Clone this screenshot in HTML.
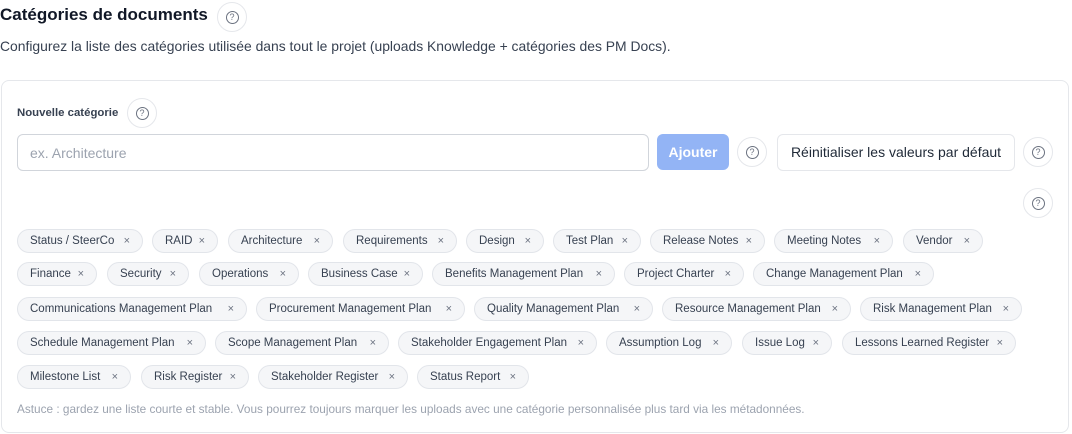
<!DOCTYPE html><html><head><meta charset="utf-8"><style>
*{box-sizing:border-box;margin:0;padding:0}
body{width:1072px;height:434px;background:#fff;font-family:"Liberation Sans",sans-serif;color:#1f2937;position:relative;overflow:hidden}
.a{position:absolute}
.q{position:absolute;width:30px;height:30px;border:1px solid #e5e7eb;border-radius:50%;background:#fff;display:flex;align-items:center;justify-content:center}
.q span{width:13px;height:13px;border:1px solid #6b7280;border-radius:50%;font-size:9px;color:#6b7280;display:flex;align-items:center;justify-content:center;line-height:1}
.c{position:absolute;height:24px;border:1px solid #e2e5ea;background:#f5f6f8;border-radius:12px;font-size:11.5px;color:#374151;display:flex;align-items:center;padding-left:12px;white-space:nowrap}
.c i{font-style:normal;color:#6b7280;font-size:11px;position:absolute;right:12px;top:5px}
</style></head><body>
<div class="a" style="left:0;top:5px;font-size:17px;font-weight:bold;color:#111827">Catégories de documents</div>
<div class="q" style="left:217px;top:2px"><span>?</span></div>
<div class="a" style="left:0;top:38px;font-size:13.9px;color:#374151">Configurez la liste des catégories utilisée dans tout le projet (uploads Knowledge + catégories des PM Docs).</div>
<div class="a" style="left:1px;top:80px;width:1068px;height:353px;border:1px solid #e5e7eb;border-radius:8px"></div>
<div class="a" style="left:17px;top:107px;font-size:11.4px;font-weight:bold;color:#374151">Nouvelle catégorie</div>
<div class="q" style="left:127px;top:98px"><span>?</span></div>
<div class="a" style="left:17px;top:134px;width:632px;height:37px;border:1px solid #d1d5db;border-radius:6px;font-size:14px;color:#9ca3af;padding:10px 12px">ex. Architecture</div>
<div class="a" style="left:657px;top:134px;width:72px;height:36px;background:#93b4f5;border-radius:6px;color:#fff;font-size:14px;font-weight:bold;text-align:center;line-height:36px">Ajouter</div>
<div class="q" style="left:737px;top:137px"><span>?</span></div>
<div class="a" style="left:777px;top:134px;width:238px;height:37px;border:1px solid #e5e7eb;border-radius:6px;font-size:14px;color:#1f2937;text-align:center;line-height:35px">Réinitialiser les valeurs par défaut</div>
<div class="q" style="left:1023px;top:137px"><span>?</span></div>
<div class="q" style="left:1023px;top:188px"><span>?</span></div>
<div class="c" style="left:17px;top:229px;width:126px">Status / SteerCo<i>×</i></div>
<div class="c" style="left:152px;top:229px;width:66px">RAID<i>×</i></div>
<div class="c" style="left:228px;top:229px;width:105px">Architecture<i>×</i></div>
<div class="c" style="left:343px;top:229px;width:114px">Requirements<i>×</i></div>
<div class="c" style="left:466px;top:229px;width:78px">Design<i>×</i></div>
<div class="c" style="left:553px;top:229px;width:88px">Test Plan<i>×</i></div>
<div class="c" style="left:650px;top:229px;width:115px">Release Notes<i>×</i></div>
<div class="c" style="left:774px;top:229px;width:119px">Meeting Notes<i>×</i></div>
<div class="c" style="left:903px;top:229px;width:80px">Vendor<i>×</i></div>
<div class="c" style="left:17px;top:262px;width:80px">Finance<i>×</i></div>
<div class="c" style="left:107px;top:262px;width:82px">Security<i>×</i></div>
<div class="c" style="left:199px;top:262px;width:100px">Operations<i>×</i></div>
<div class="c" style="left:308px;top:262px;width:115px">Business Case<i>×</i></div>
<div class="c" style="left:432px;top:262px;width:183px">Benefits Management Plan<i>×</i></div>
<div class="c" style="left:624px;top:262px;width:120px">Project Charter<i>×</i></div>
<div class="c" style="left:753px;top:262px;width:181px">Change Management Plan<i>×</i></div>
<div class="c" style="left:17px;top:297px;width:230px">Communications Management Plan<i>×</i></div>
<div class="c" style="left:256px;top:297px;width:209px">Procurement Management Plan<i>×</i></div>
<div class="c" style="left:474px;top:297px;width:179px">Quality Management Plan<i>×</i></div>
<div class="c" style="left:662px;top:297px;width:189px">Resource Management Plan<i>×</i></div>
<div class="c" style="left:860px;top:297px;width:162px">Risk Management Plan<i>×</i></div>
<div class="c" style="left:17px;top:331px;width:189px">Schedule Management Plan<i>×</i></div>
<div class="c" style="left:215px;top:331px;width:174px">Scope Management Plan<i>×</i></div>
<div class="c" style="left:398px;top:331px;width:199px">Stakeholder Engagement Plan<i>×</i></div>
<div class="c" style="left:606px;top:331px;width:126px">Assumption Log<i>×</i></div>
<div class="c" style="left:742px;top:331px;width:90px">Issue Log<i>×</i></div>
<div class="c" style="left:842px;top:331px;width:174px">Lessons Learned Register<i>×</i></div>
<div class="c" style="left:17px;top:365px;width:114px">Milestone List<i>×</i></div>
<div class="c" style="left:141px;top:365px;width:108px">Risk Register<i>×</i></div>
<div class="c" style="left:258px;top:365px;width:150px">Stakeholder Register<i>×</i></div>
<div class="c" style="left:417px;top:365px;width:112px">Status Report<i>×</i></div>
<div class="a" style="left:17px;top:402px;font-size:11.8px;color:#9ca3af">Astuce : gardez une liste courte et stable. Vous pourrez toujours marquer les uploads avec une catégorie personnalisée plus tard via les métadonnées.</div>
</body></html>
